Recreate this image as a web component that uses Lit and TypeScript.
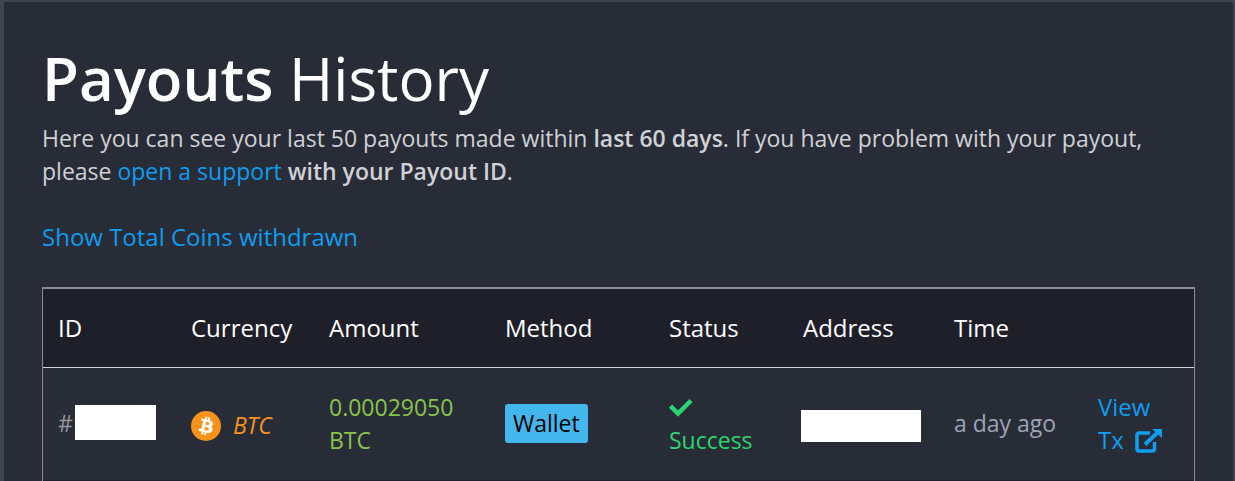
import { LitElement, html, css } from "lit";
import { customElement } from "lit/decorators.js";

const columns = [
  { label: "ID", share: 133 },
  { label: "Currency", share: 138 },
  { label: "Amount", share: 176 },
  { label: "Method", share: 164 },
  { label: "Status", share: 134 },
  { label: "Address", share: 151 },
  { label: "Time", share: 144 },
  { label: "", share: 111 },
];
const total = columns.reduce((sum, c) => sum + c.share, 0);

@customElement("app-root")
export class AppRoot extends LitElement {
  static styles = css`
    :host {
      display: block;
      box-sizing: border-box;
      min-height: 100vh;
      padding: 46px 38px 0;
      border: 2px solid #3f444d;
      border-left-width: 4px;
      border-bottom: 0;
      background: #282c37;
      color: #cfd1d5;
      font-family: "Open Sans", "Noto Sans", sans-serif;
      font-size: 23px;
      line-height: 33px;
    }
    h1 {
      margin: 0;
      color: #fff;
      font-size: 60px;
      line-height: 60px;
      font-weight: 400;
    }
    h1 b, .strong {
      font-weight: 600;
    }
    p {
      margin: 14px 0 32px;
    }
    a {
      color: #0d9df1;
      text-decoration: none;
    }
    .totals, th, .view {
      font-size: 24px;
    }
    .totals {
      display: inline-block;
    }
    table {
      width: 100%;
      margin-top: 33px;
      table-layout: fixed;
      border-collapse: separate;
      border-spacing: 0;
      border: 1px solid #8a8d96;
      border-top-width: 2px;
      border-bottom: 0;
    }
    th, td {
      padding: 22px 15px 23px;
      text-align: left;
      vertical-align: middle;
    }
    th {
      background: #1e1f29;
      border-bottom: 1px solid #d5d6d9;
      color: #fff;
      font-weight: 400;
    }
    td {
      border-bottom: 2px solid #1e1f29;
    }
    .id, .currency {
      display: flex;
      align-items: center;
    }
    .id {
      color: #92949a;
    }
    .mask {
      display: block;
      background: #fff;
    }
    .mask-id {
      width: 81px;
      height: 35px;
      margin-left: 2px;
      margin-bottom: 3px;
    }
    .mask-address {
      width: 120px;
      height: 32px;
      margin: 4px 0 0 -2px;
    }
    .currency {
      gap: 12px;
      margin-top: 4px;
      color: #f7931a;
      font-style: italic;
    }
    .coin {
      width: 30px;
      height: 30px;
      flex: none;
    }
    .amount {
      color: #87c44b;
    }
    .badge {
      display: inline-block;
      padding: 3px 8px;
      border-radius: 3px;
      background: #43b6ee;
      color: #000;
    }
    .status {
      color: #2ad573;
    }
    .check {
      display: block;
      width: 24px;
      height: 33px;
    }
    .time {
      color: #9ca4b5;
    }
    .view {
      display: inline-block;
      width: 72px;
    }
    .external {
      width: 27px;
      height: 25px;
      margin-left: 5px;
      vertical-align: -4px;
    }
  `;

  render() {
    return html`
      <main>
        <h1><b>Payouts</b> History</h1>
        <p>
          Here you can see your last 50 payouts made within
          <span class="strong">last 60 days</span>. If you have problem with your payout, please
          <a href="#support">open a support</a>
          <span class="strong">with your Payout ID</span>.
        </p>
        <a class="totals" href="#totals">Show Total Coins withdrawn</a>
        <table>
          <colgroup>
            ${columns.map((c) => html`<col style="width:${(c.share / total) * 100}%" />`)}
          </colgroup>
          <thead>
            <tr>${columns.map((c) => html`<th scope="col">${c.label}</th>`)}</tr>
          </thead>
          <tbody>
            <tr>
              <td><span class="id">#<span class="mask mask-id"></span></span></td>
              <td>
                <span class="currency">
                  <svg class="coin" viewBox="0 0 32 32" aria-hidden="true">
                    <circle cx="16" cy="16" r="16" fill="#f7931a" />
                    <path fill="#fff" stroke="#fff" stroke-width="0.3" d="M23.189 14.02c.314-2.096-1.283-3.223-3.465-3.975l.708-2.84-1.728-.43-.69 2.765c-.454-.114-.92-.22-1.385-.326l.695-2.783L15.596 6l-.708 2.839c-.376-.086-.746-.17-1.104-.26l.002-.009-2.384-.595-.46 1.846s1.283.294 1.256.312c.7.175.826.638.805 1.006l-.806 3.235c.048.012.11.03.18.057l-.183-.045-1.13 4.532c-.086.212-.303.531-.793.41.018.025-1.256-.313-1.256-.313l-.858 1.978 2.25.561c.418.105.828.215 1.231.318l-.715 2.872 1.727.43.708-2.84c.472.127.93.245 1.378.357l-.706 2.828 1.728.43.715-2.866c2.948.558 5.164.333 6.097-2.333.752-2.146-.037-3.385-1.588-4.192 1.13-.26 1.98-1.003 2.207-2.538zm-3.95 5.538c-.533 2.147-4.148.986-5.32.695l.95-3.805c1.172.293 4.929.872 4.37 3.11zm.535-5.569c-.487 1.953-3.495.96-4.47.717l.86-3.45c.975.243 4.118.696 3.61 2.733z" />
                  </svg>
                  BTC
                </span>
              </td>
              <td class="amount">0.00029050 BTC</td>
              <td><span class="badge">Wallet</span></td>
              <td class="status">
                <svg class="check" viewBox="0 0 24 33" aria-hidden="true">
                  <path d="M1.500 15 9 22.500 22 9.500" fill="none" stroke="currentColor" stroke-width="4.500" />
                </svg>
                Success
              </td>
              <td><span class="mask mask-address"></span></td>
              <td class="time">a day ago</td>
              <td>
                <a class="view" href="#tx">View Tx
                  <svg class="external" viewBox="0 0 27 25" aria-hidden="true">
                    <path d="M15 5H4Q2 5 2 7V21Q2 23 4 23H17.500Q19.500 23 19.500 21V14" fill="none" stroke="currentColor" stroke-width="3.500" />
                    <path d="M10 16.500 22 5" fill="none" stroke="currentColor" stroke-width="4" />
                    <path d="M17 1H27V10Z" fill="currentColor" />
                  </svg>
                </a>
              </td>
            </tr>
          </tbody>
        </table>
      </main>
    `;
  }
}
